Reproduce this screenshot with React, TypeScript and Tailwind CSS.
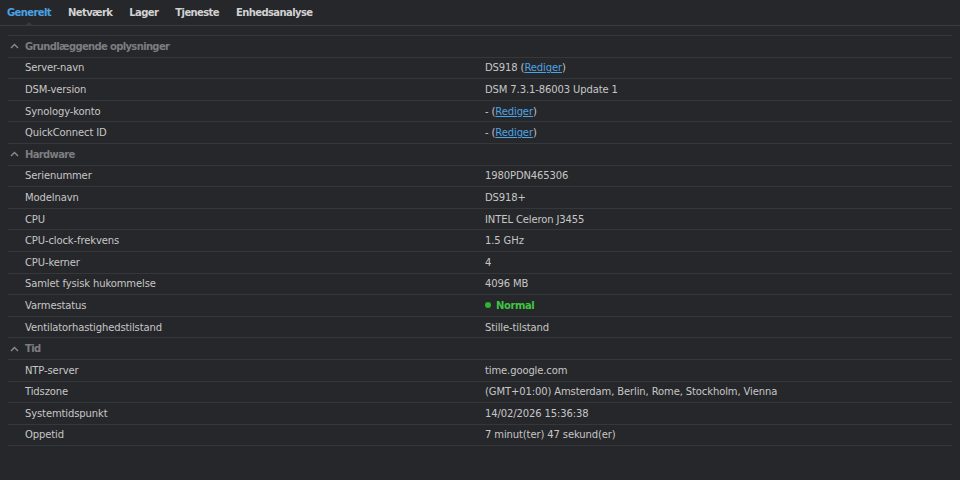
import React from 'react';

type Row = { label: string; value: React.ReactNode };
type Group = { title: string; rows: Row[] };

const Link: React.FC<{ children: React.ReactNode }> = ({ children }) => (
    <span className="text-[#4ea3e3] underline">{children}</span>
);

const groups: Group[] = [
    {
        title: 'Grundlæggende oplysninger',
        rows: [
            { label: 'Server-navn', value: <>DS918 (<Link>Rediger</Link>)</> },
            { label: 'DSM-version', value: 'DSM 7.3.1-86003 Update 1' },
            { label: 'Synology-konto', value: <>- (<Link>Rediger</Link>)</> },
            { label: 'QuickConnect ID', value: <>- (<Link>Rediger</Link>)</> },
        ],
    },
    {
        title: 'Hardware',
        rows: [
            { label: 'Serienummer', value: '1980PDN465306' },
            { label: 'Modelnavn', value: 'DS918+' },
            { label: 'CPU', value: 'INTEL Celeron J3455' },
            { label: 'CPU-clock-frekvens', value: '1.5 GHz' },
            { label: 'CPU-kerner', value: '4' },
            { label: 'Samlet fysisk hukommelse', value: '4096 MB' },
            {
                label: 'Varmestatus',
                value: (
                    <span className="flex items-center gap-[5px] font-bold tracking-[-0.4px] text-[#3fc53f]">
                        <span className="w-[6px] h-[6px] rounded-full bg-[#2fb52f]" />
                        Normal
                    </span>
                ),
            },
            { label: 'Ventilatorhastighedstilstand', value: 'Stille-tilstand' },
        ],
    },
    {
        title: 'Tid',
        rows: [
            { label: 'NTP-server', value: 'time.google.com' },
            { label: 'Tidszone', value: '(GMT+01:00) Amsterdam, Berlin, Rome, Stockholm, Vienna' },
            { label: 'Systemtidspunkt', value: '14/02/2026 15:36:38' },
            { label: 'Oppetid', value: '7 minut(ter) 47 sekund(er)' },
        ],
    },
];

const tabs = ['Generelt', 'Netværk', 'Lager', 'Tjeneste', 'Enhedsanalyse'];

const Chevron = () => (
    <svg width="9" height="6" viewBox="0 0 9 6" className="text-[#8a8b8e]">
        <path d="M1 5 L4.5 1.5 L8 5" fill="none" stroke="currentColor" strokeWidth="1.4" />
    </svg>
);

const App: React.FC = () => {
    return (
        <div
            className="w-[960px] h-[480px] bg-[#26272b] text-[10px] tracking-[-0.12px] text-[#c6c6c6] overflow-hidden"
            style={{ fontFamily: '"DejaVu Sans", Verdana, sans-serif' }}
        >
            {/* tabs */}
            <div className="relative h-[26px] border-b border-[#3a3b3f] flex items-center gap-[17px] pl-[7px] pb-[1px]">
                {tabs.map((t, i) => (
                    <span
                        key={t}
                        className={`relative font-bold tracking-[-0.6px] ${i === 0 ? 'text-[#4aa2e6]' : 'text-[#d2d2d2]'}`}
                    >
                        {t}
                        {i === 0 && (
                            <span className="absolute left-1/2 -translate-x-1/2 top-[17px] w-0 h-0 border-l-[4px] border-r-[4px] border-b-[4px] border-l-transparent border-r-transparent border-b-[#3a3b3f]" />
                        )}
                    </span>
                ))}
            </div>

            <div className="mt-[9px] mx-[8px] w-[944px] border-t border-[#36373b]">
                {groups.map((g) => (
                    <div key={g.title}>
                        <div className="h-[21.6px] border-b border-[#36373b] flex items-center gap-[6px] pl-[2px]">
                            <Chevron />
                            <span className="font-bold tracking-[-0.65px] text-[#7c7d80]">{g.title}</span>
                        </div>
                        {g.rows.map((r) => (
                            <div
                                key={r.label}
                                className="h-[21.6px] border-b border-[#36373b] grid grid-cols-[460px_1fr] items-center pl-[17px]"
                            >
                                <span>{r.label}</span>
                                <span className="flex items-center">{r.value}</span>
                            </div>
                        ))}
                    </div>
                ))}
            </div>
        </div>
    );
};

export default App;
